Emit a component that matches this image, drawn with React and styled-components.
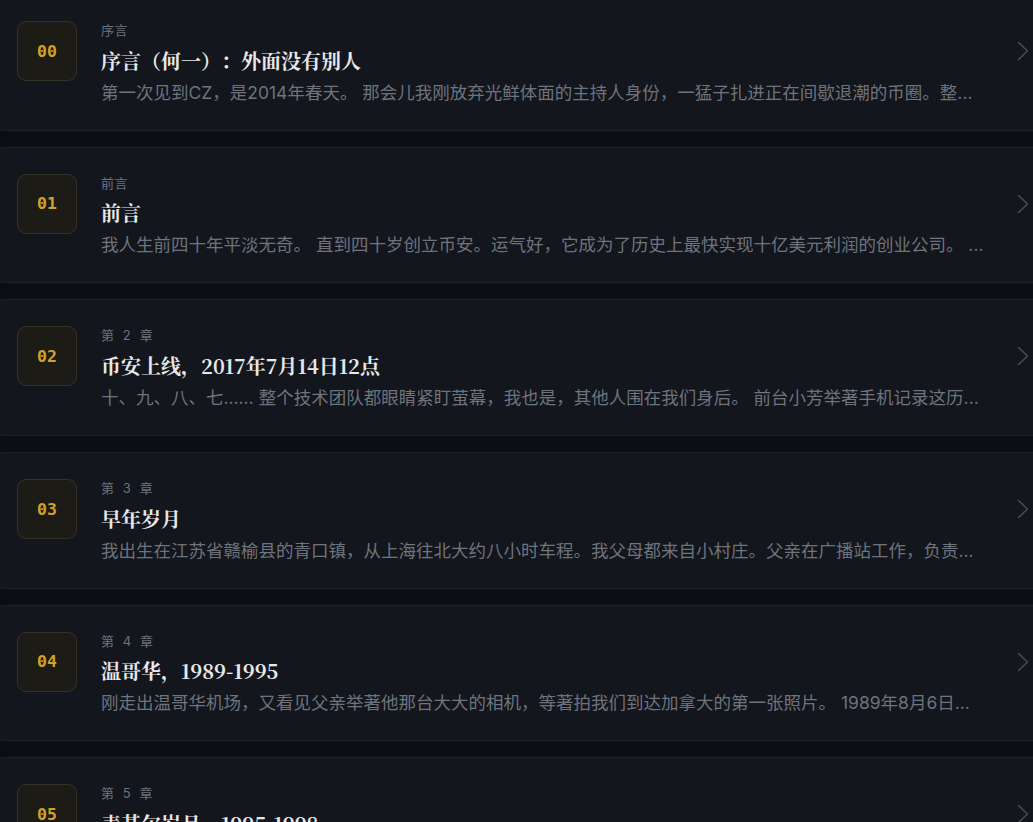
import React from "react";
import styled, { createGlobalStyle } from "styled-components";

const Global = createGlobalStyle`
  html, body {
    margin: 0;
    padding: 0;
    background: #0c0e13;
    overflow: hidden;
  }
  body {
    font-family: "Inter", "Noto Sans CJK SC", sans-serif;
    text-spacing-trim: space-all;
  }
`;

const List = styled.div`
  display: flex;
  flex-direction: column;
  gap: 16px;
  width: 1066px;
  margin: -6px 0 0 -8px;
`;

const Card = styled.div`
  display: flex;
  align-items: flex-start;
  gap: 24px;
  padding: 26px 24px 24px 24px;
  background: #13161d;
  border: 1px solid #1e222a;
  border-radius: 12px;
  box-sizing: border-box;
  height: 136.7px;
`;

const Badge = styled.div`
  flex: 0 0 60px;
  height: 60px;
  box-sizing: border-box;
  border-radius: 9px;
  background: #1d1b15;
  border: 1px solid #363223;
  display: flex;
  align-items: center;
  justify-content: center;
  font-family: "DejaVu Sans Mono", "Liberation Mono", monospace;
  font-weight: 700;
  font-size: 16.5px;
  color: #d1a229;
`;

const Body = styled.div`
  flex: 1;
  min-width: 0;
  display: flex;
  flex-direction: column;
`;

const Label = styled.div`
  font-size: 13px;
  line-height: 19.5px;
  color: #6d727c;
  letter-spacing: ${(p) => (p.$chapter ? "2.6px" : "0.5px")};
`;

const Title = styled.div`
  margin-top: 6px;
  font-family: "Noto Serif CJK SC", "Liberation Serif", "Noto Sans CJK SC", serif;
  font-weight: 700;
  font-size: 20px;
  line-height: 28px;
  color: #e8e8e8;
  white-space: nowrap;
  text-spacing-trim: space-all;
`;

const Desc = styled.div`
  margin-top: 4px;
  font-size: 17.5px;
  line-height: 27.2px;
  color: #6e737c;
  white-space: nowrap;
  overflow: hidden;
  text-overflow: ellipsis;
  padding-right: 4px;
  text-spacing-trim: space-all;
`;

const Arrow = styled.div`
  flex: 0 0 20px;
  height: 60px;
  display: flex;
  align-items: center;
  justify-content: center;
  color: #4a4f59;
`;

const Chevron = () => (
  <svg width="12" height="20" viewBox="0 0 12 20" fill="none">
    <polyline points="1.5,1.5 10.5,10 1.5,18.5" stroke="currentColor" strokeWidth="1.4" strokeLinecap="round" strokeLinejoin="round" />
  </svg>
);

const chapters = [
  {
    no: "00",
    label: "序言",
    title: "序言（何一）：外面没有别人",
    desc: "第一次见到CZ，是2014年春天。 那会儿我刚放弃光鲜体面的主持人身份，一猛子扎进正在间歇退潮的币圈。整...",
  },
  {
    no: "01",
    label: "前言",
    title: "前言",
    desc: "我人生前四十年平淡无奇。 直到四十岁创立币安。运气好，它成为了历史上最快实现十亿美元利润的创业公司。 ...",
  },
  {
    no: "02",
    label: "第 2 章",
    chapter: true,
    title: "币安上线，2017年7月14日12点",
    desc: "十、九、八、七…… 整个技术团队都眼睛紧盯萤幕，我也是，其他人围在我们身后。 前台小芳举著手机记录这历...",
  },
  {
    no: "03",
    label: "第 3 章",
    chapter: true,
    title: "早年岁月",
    desc: "我出生在江苏省赣榆县的青口镇，从上海往北大约八小时车程。我父母都来自小村庄。父亲在广播站工作，负责...",
  },
  {
    no: "04",
    label: "第 4 章",
    chapter: true,
    title: "温哥华，1989-1995",
    desc: "刚走出温哥华机场，又看见父亲举著他那台大大的相机，等著拍我们到达加拿大的第一张照片。 1989年8月6日...",
  },
  {
    no: "05",
    label: "第 5 章",
    chapter: true,
    title: "麦基尔岁月，1995-1998",
    desc: "我在蒙特利尔的麦基尔大学念计算机科学，那几年我白天上课，晚上打工，周末还要去餐馆帮忙。生活很忙...",
  },
];

export default function App() {
  return (
    <>
      <Global />
      <List>
        {chapters.map((c) => (
          <Card key={c.no}>
            <Badge>{c.no}</Badge>
            <Body>
              <Label $chapter={c.chapter}>{c.label}</Label>
              <Title>{c.title}</Title>
              <Desc>{c.desc}</Desc>
            </Body>
            <Arrow>
              <Chevron />
            </Arrow>
          </Card>
        ))}
      </List>
    </>
  );
}
